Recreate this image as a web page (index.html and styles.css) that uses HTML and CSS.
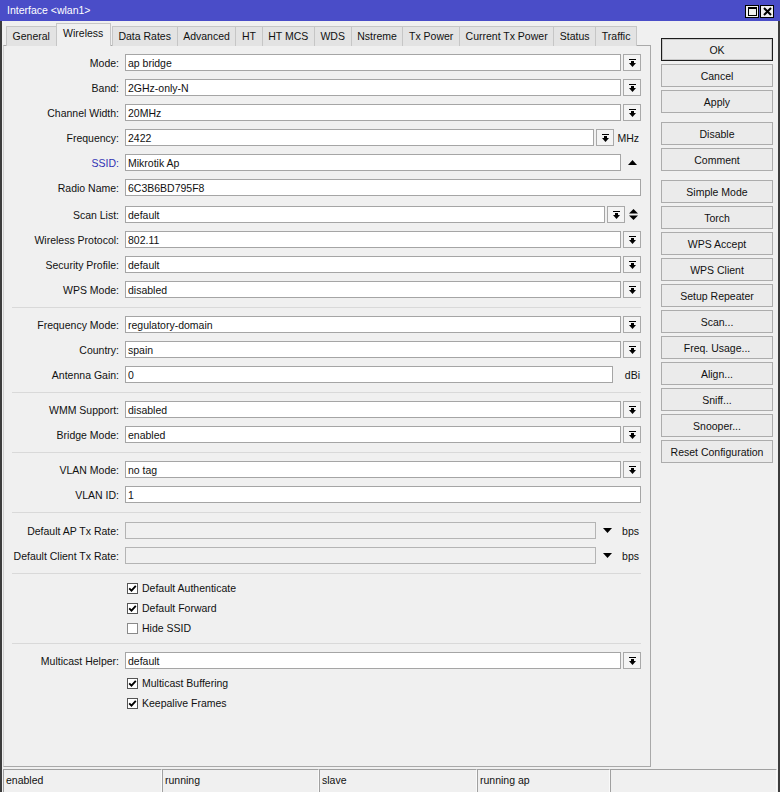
FILE: index.html
```html
<!DOCTYPE html>
<html>
<head>
<meta charset="utf-8">
<title>Interface &lt;wlan1&gt;</title>
<link rel="stylesheet" href="styles.css">
</head>
<body>
<div class="window">
  <div class="titlebar">
    <span class="title">Interface &lt;wlan1&gt;</span>
    <div class="tb-btns">
      <span class="tb-btn"><svg width="9" height="9" viewBox="0 0 9 9"><rect x="0.5" y="0.5" width="8" height="8" fill="none" stroke="#000"/><rect x="0" y="0" width="9" height="2" fill="#000"/></svg></span>
      <span class="tb-btn"><svg width="9" height="9" viewBox="0 0 9 9"><path d="M1 1 L8 8 M8 1 L1 8" stroke="#000" stroke-width="2"/></svg></span>
    </div>
  </div>

  <div class="body">
    <div class="main">
      <div class="tabs">
        <span class="tab">General</span>
        <span class="tab active">Wireless</span>
        <span class="tab">Data Rates</span>
        <span class="tab">Advanced</span>
        <span class="tab">HT</span>
        <span class="tab">HT MCS</span>
        <span class="tab">WDS</span>
        <span class="tab">Nstreme</span>
        <span class="tab">Tx Power</span>
        <span class="tab">Current Tx Power</span>
        <span class="tab">Status</span>
        <span class="tab">Traffic</span>
      </div>

      <div class="panel">
        <div class="group">
          <div class="row"><label class="lbl">Mode:</label><div class="ctl"><span class="field">ap bridge</span><span class="dropbtn"><svg width="7" height="8" viewBox="0 0 7 8"><rect x="0" y="0" width="7" height="1"/><polygon points="2,2 5,2 5,4 7,4 3.5,8 0,4 2,4"/></svg></span></div></div>
          <div class="row"><label class="lbl">Band:</label><div class="ctl"><span class="field">2GHz-only-N</span><span class="dropbtn"><svg width="7" height="8" viewBox="0 0 7 8"><rect x="0" y="0" width="7" height="1"/><polygon points="2,2 5,2 5,4 7,4 3.5,8 0,4 2,4"/></svg></span></div></div>
          <div class="row"><label class="lbl">Channel Width:</label><div class="ctl"><span class="field">20MHz</span><span class="dropbtn"><svg width="7" height="8" viewBox="0 0 7 8"><rect x="0" y="0" width="7" height="1"/><polygon points="2,2 5,2 5,4 7,4 3.5,8 0,4 2,4"/></svg></span></div></div>
          <div class="row"><label class="lbl">Frequency:</label><div class="ctl"><span class="field">2422</span><span class="dropbtn"><svg width="7" height="8" viewBox="0 0 7 8"><rect x="0" y="0" width="7" height="1"/><polygon points="2,2 5,2 5,4 7,4 3.5,8 0,4 2,4"/></svg></span><span class="unit">MHz</span></div></div>
          <div class="row"><label class="lbl lbl-blue">SSID:</label><div class="ctl"><span class="field">Mikrotik Ap</span><span class="slot"><svg width="9" height="5" viewBox="0 0 9 5"><polygon points="0,5 9,5 4.5,0"/></svg></span></div></div>
          <div class="row row-tall"><label class="lbl">Radio Name:</label><div class="ctl"><span class="field">6C3B6BD795F8</span></div></div>
          <div class="row"><label class="lbl">Scan List:</label><div class="ctl"><span class="field">default</span><span class="dropbtn"><svg width="7" height="8" viewBox="0 0 7 8"><rect x="0" y="0" width="7" height="1"/><polygon points="2,2 5,2 5,4 7,4 3.5,8 0,4 2,4"/></svg></span><span class="slot slot-sm"><svg width="9" height="11" viewBox="0 0 9 11"><polygon points="0,4.5 9,4.5 4.5,0"/><polygon points="0,6.5 9,6.5 4.5,11"/></svg></span></div></div>
          <div class="row"><label class="lbl">Wireless Protocol:</label><div class="ctl"><span class="field">802.11</span><span class="dropbtn"><svg width="7" height="8" viewBox="0 0 7 8"><rect x="0" y="0" width="7" height="1"/><polygon points="2,2 5,2 5,4 7,4 3.5,8 0,4 2,4"/></svg></span></div></div>
          <div class="row"><label class="lbl">Security Profile:</label><div class="ctl"><span class="field">default</span><span class="dropbtn"><svg width="7" height="8" viewBox="0 0 7 8"><rect x="0" y="0" width="7" height="1"/><polygon points="2,2 5,2 5,4 7,4 3.5,8 0,4 2,4"/></svg></span></div></div>
          <div class="row"><label class="lbl">WPS Mode:</label><div class="ctl"><span class="field">disabled</span><span class="dropbtn"><svg width="7" height="8" viewBox="0 0 7 8"><rect x="0" y="0" width="7" height="1"/><polygon points="2,2 5,2 5,4 7,4 3.5,8 0,4 2,4"/></svg></span></div></div>
        </div>
        <div class="sep"></div>
        <div class="group">
          <div class="row"><label class="lbl">Frequency Mode:</label><div class="ctl"><span class="field">regulatory-domain</span><span class="dropbtn"><svg width="7" height="8" viewBox="0 0 7 8"><rect x="0" y="0" width="7" height="1"/><polygon points="2,2 5,2 5,4 7,4 3.5,8 0,4 2,4"/></svg></span></div></div>
          <div class="row"><label class="lbl">Country:</label><div class="ctl"><span class="field">spain</span><span class="dropbtn"><svg width="7" height="8" viewBox="0 0 7 8"><rect x="0" y="0" width="7" height="1"/><polygon points="2,2 5,2 5,4 7,4 3.5,8 0,4 2,4"/></svg></span></div></div>
          <div class="row"><label class="lbl">Antenna Gain:</label><div class="ctl"><span class="field">0</span><span class="unit unit-wide">dBi</span></div></div>
        </div>
        <div class="sep"></div>
        <div class="group">
          <div class="row"><label class="lbl">WMM Support:</label><div class="ctl"><span class="field">disabled</span><span class="dropbtn"><svg width="7" height="8" viewBox="0 0 7 8"><rect x="0" y="0" width="7" height="1"/><polygon points="2,2 5,2 5,4 7,4 3.5,8 0,4 2,4"/></svg></span></div></div>
          <div class="row"><label class="lbl">Bridge Mode:</label><div class="ctl"><span class="field">enabled</span><span class="dropbtn"><svg width="7" height="8" viewBox="0 0 7 8"><rect x="0" y="0" width="7" height="1"/><polygon points="2,2 5,2 5,4 7,4 3.5,8 0,4 2,4"/></svg></span></div></div>
        </div>
        <div class="sep"></div>
        <div class="group">
          <div class="row"><label class="lbl">VLAN Mode:</label><div class="ctl"><span class="field">no tag</span><span class="dropbtn"><svg width="7" height="8" viewBox="0 0 7 8"><rect x="0" y="0" width="7" height="1"/><polygon points="2,2 5,2 5,4 7,4 3.5,8 0,4 2,4"/></svg></span></div></div>
          <div class="row"><label class="lbl">VLAN ID:</label><div class="ctl"><span class="field">1</span></div></div>
        </div>
        <div class="sep"></div>
        <div class="group group-rates">
          <div class="row"><label class="lbl">Default AP Tx Rate:</label><div class="ctl"><span class="field field-off"></span><span class="slot slot-rate"><svg width="9" height="5" viewBox="0 0 9 5"><polygon points="0,0 9,0 4.5,5"/></svg></span><span class="unit">bps</span></div></div>
          <div class="row"><label class="lbl">Default Client Tx Rate:</label><div class="ctl"><span class="field field-off"></span><span class="slot slot-rate"><svg width="9" height="5" viewBox="0 0 9 5"><polygon points="0,0 9,0 4.5,5"/></svg></span><span class="unit">bps</span></div></div>
        </div>
        <div class="sep"></div>
        <div class="group">
          <div class="check"><span class="box"><svg width="9" height="9" viewBox="0 0 9 9"><path d="M1.2 4.3 L3.5 6.7 L7.8 1.8" fill="none" stroke="#000" stroke-width="1.8"/></svg></span>Default Authenticate</div>
          <div class="check"><span class="box"><svg width="9" height="9" viewBox="0 0 9 9"><path d="M1.2 4.3 L3.5 6.7 L7.8 1.8" fill="none" stroke="#000" stroke-width="1.8"/></svg></span>Default Forward</div>
          <div class="check"><span class="box box-off"></span>Hide SSID</div>
        </div>
        <div class="sep"></div>
        <div class="group">
          <div class="row"><label class="lbl">Multicast Helper:</label><div class="ctl"><span class="field">default</span><span class="dropbtn"><svg width="7" height="8" viewBox="0 0 7 8"><rect x="0" y="0" width="7" height="1"/><polygon points="2,2 5,2 5,4 7,4 3.5,8 0,4 2,4"/></svg></span></div></div>
          <div class="check"><span class="box"><svg width="9" height="9" viewBox="0 0 9 9"><path d="M1.2 4.3 L3.5 6.7 L7.8 1.8" fill="none" stroke="#000" stroke-width="1.8"/></svg></span>Multicast Buffering</div>
          <div class="check"><span class="box"><svg width="9" height="9" viewBox="0 0 9 9"><path d="M1.2 4.3 L3.5 6.7 L7.8 1.8" fill="none" stroke="#000" stroke-width="1.8"/></svg></span>Keepalive Frames</div>
        </div>
      </div>
    </div>

    <div class="side">
      <div class="btn-group">
        <button class="btn btn-default">OK</button>
        <button class="btn">Cancel</button>
        <button class="btn">Apply</button>
      </div>
      <div class="btn-group">
        <button class="btn">Disable</button>
        <button class="btn">Comment</button>
      </div>
      <div class="btn-group">
        <button class="btn">Simple Mode</button>
        <button class="btn">Torch</button>
        <button class="btn">WPS Accept</button>
        <button class="btn">WPS Client</button>
        <button class="btn">Setup Repeater</button>
        <button class="btn">Scan...</button>
        <button class="btn">Freq. Usage...</button>
        <button class="btn">Align...</button>
        <button class="btn">Sniff...</button>
        <button class="btn">Snooper...</button>
        <button class="btn">Reset Configuration</button>
      </div>
    </div>
  </div>

  <div class="statusbar">
    <span class="cell c1">enabled</span>
    <span class="cell c2">running</span>
    <span class="cell c3">slave</span>
    <span class="cell c4">running ap</span>
    <span class="cell c5"></span>
  </div>
</div>
</body>
</html>
```

FILE: styles.css
```css
* { box-sizing: border-box; }

html, body {
  margin: 0;
  padding: 0;
  background: #f0f0f0;
}

body {
  font-family: "Liberation Sans", Arial, sans-serif;
  font-size: 10.5px;
  color: #111;
  width: 780px;
  height: 792px;
  overflow: hidden;
}

.window {
  width: 780px;
  height: 792px;
  background: #f0f0f0;
  border-left: 2px solid #3c3c3c;
  border-right: 2px solid #3c3c3c;
  display: flex;
  flex-direction: column;
}

/* title bar */
.titlebar {
  height: 21px;
  margin: 0 -2px;
  background: #4a4dc8;
  color: #fff;
  display: flex;
  align-items: center;
  justify-content: space-between;
  padding: 0 6px 0 7px;
  flex: none;
}

.title {
  font-size: 10.5px;
  line-height: 21px;
}

.tb-btns {
  display: flex;
  gap: 1px;
  margin-top: 1px;
}

.tb-btn {
  width: 14px;
  height: 13px;
  background: #f0f0f0;
  border: 1px solid #000;
  display: flex;
  align-items: center;
  justify-content: center;
}

/* body: form + button column */
.body {
  height: 746px;
  display: flex;
  flex: none;
}

.main {
  width: 648px;
  margin-left: 1px;
  display: flex;
  flex-direction: column;
}

.tabs {
  display: flex;
  align-items: flex-end;
  height: 25px;
  padding-top: 2px;
  padding-left: 3px;
  margin-bottom: -1px;
  position: relative;
  z-index: 1;
}

.tab {
  height: 20px;
  line-height: 19px;
  padding: 0 5.6px;
  background: #e3e3e3;
  border: 1px solid #c6c6c6;
  border-bottom: none;
  margin-right: -1px;
  white-space: nowrap;
}

.tab.active {
  height: 23px;
  line-height: 19px;
  background: #f0f0f0;
  border-color: #c6c6c6;
  padding: 0 6.5px;
  margin: 0 1px 0 0;
  position: relative;
  z-index: 2;
}

.panel {
  flex: 1;
  border: 1px solid #a9a9a9;
  border-left-color: #d0d0d0;
  padding: 4px 9px 0 0;
}

.group-rates {
  padding-top: 1px;
}

.row {
  display: flex;
  align-items: center;
  height: 25px;
}

.row-tall {
  height: 27px;
  padding-bottom: 2px;
}

.lbl {
  width: 116px;
  flex: none;
  text-align: right;
  padding-right: 1px;
  white-space: nowrap;
}

.lbl-blue {
  color: #3232b4;
}

.ctl {
  flex: 1;
  margin-left: 5px;
  display: flex;
  align-items: center;
  gap: 2px;
  height: 17px;
}

.field {
  flex: 1;
  height: 17px;
  line-height: 16px;
  background: #fff;
  border: 1px solid #a5a5a5;
  padding-left: 2px;
  white-space: nowrap;
}

.field-off {
  background: #f0f0f0;
  border-color: #b4b4b4;
}

.dropbtn {
  width: 18px;
  height: 17px;
  flex: none;
  background: #f4f4f4;
  border: 1px solid #a9a9a9;
  display: flex;
  align-items: center;
  justify-content: center;
}

.dropbtn svg, .slot svg {
  display: block;
  fill: #000;
}

.slot {
  width: 18px;
  height: 17px;
  flex: none;
  display: flex;
  align-items: center;
  justify-content: center;
}

.slot-sm {
  width: 16px;
  margin-left: -2px;
}

.slot-rate {
  width: 18px;
  margin-right: -2px;
}

.unit {
  width: 27px;
  flex: none;
  text-align: right;
  padding-right: 2px;
  margin-left: -2px;
}

.unit-wide {
  width: 28px;
  margin-left: -2px;
  padding-right: 1px;
}

.sep {
  height: 1px;
  background: #d9d9d9;
  margin: 5px 0 4px 8px;
}

.check {
  display: flex;
  align-items: center;
  height: 20px;
  padding-left: 123px;
}

.box {
  width: 11px;
  height: 11px;
  flex: none;
  background: #fff;
  border: 1px solid #555;
  margin-right: 4px;
  display: flex;
  align-items: center;
  justify-content: center;
}

.box svg {
  display: block;
}

.box-off {
  border-color: #8a8a8a;
}

/* right-hand action buttons */
.side {
  width: 112px;
  margin-left: 10px;
  padding-top: 17px;
  display: flex;
  flex-direction: column;
  gap: 9px;
}

.btn-group {
  display: flex;
  flex-direction: column;
  gap: 3px;
}

.btn {
  height: 23px;
  font-family: "Liberation Sans", Arial, sans-serif;
  font-size: 10.5px;
  color: #111;
  background: #ebebeb;
  border: 1px solid #acacac;
  padding: 0;
  margin: 0;
}

.btn-default {
  border-color: #1c1c1c;
  box-shadow: inset 0 0 0 1px #c8c8c8;
}

/* status bar */
.statusbar {
  flex: 1;
  display: flex;
  padding-top: 2px;
  margin-left: 1px;
}

.cell {
  height: 23px;
  border-top: 1px solid #a0a0a0;
  border-left: 1px solid #a0a0a0;
  border-right: 1px solid #fafafa;
  padding-left: 2px;
  line-height: 20px;
  white-space: nowrap;
}

.c1 { width: 159px; }
.c2 { width: 157px; }
.c3 { width: 158px; }
.c4 { width: 133px; }
.c5 { width: 167px; }
```
